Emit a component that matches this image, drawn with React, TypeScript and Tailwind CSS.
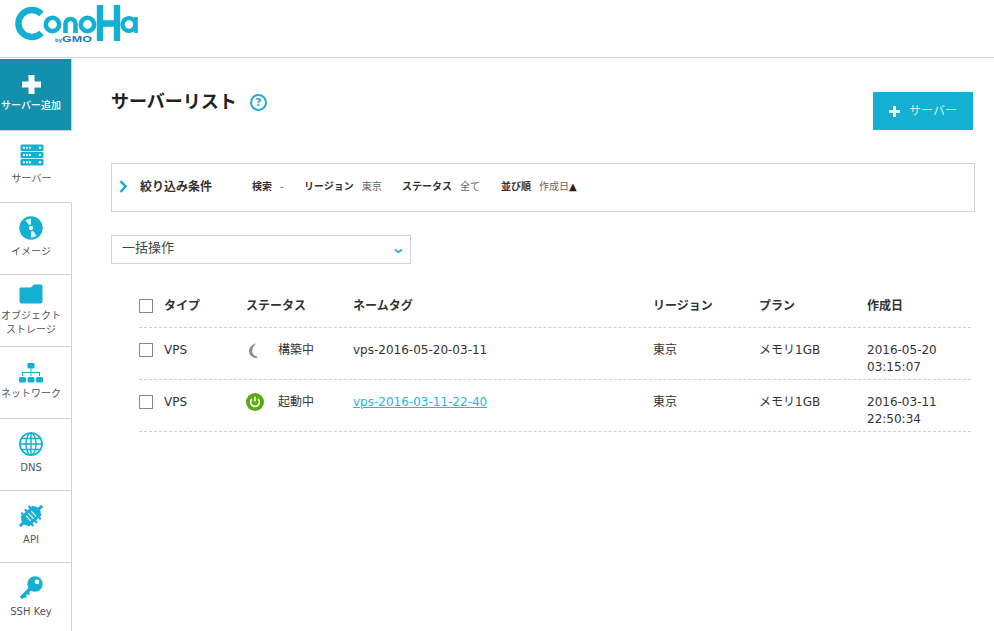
import type { ReactNode } from 'react';

const FONT = "font-['DejaVu_Sans','Noto_Sans_CJK_JP',sans-serif]";

const Logo = () => (
  <svg width="126" height="40" viewBox="14 4 126 40" className="block">
    <g fill="none" stroke="#13b0d3">
      <path d="M41.5 14 A13.5 13.5 0 1 0 41.5 33" strokeWidth="6.5" />
      <circle cx="52.5" cy="24.5" r="6.7" strokeWidth="4.6" />
      <path d="M65.5 33 V24 A5 5 0 0 1 75.5 24 V33" strokeWidth="4.6" />
      <circle cx="87.5" cy="24.5" r="6.7" strokeWidth="4.6" />
      <path d="M100 5 V41 M117 5 V41 M100 23.5 H117" strokeWidth="6.4" />
      <circle cx="129" cy="24.5" r="6.4" strokeWidth="4.4" />
      <path d="M136 17 V33" strokeWidth="3.6" />
    </g>
    <text x="55" y="41.5" fontSize="6" fontWeight="700" fill="#1f78b8" fontFamily="Liberation Sans">by</text>
    <text x="62" y="42" fontSize="9.5" fontWeight="700" fill="#1f78b8" fontFamily="Liberation Sans" textLength="30" lengthAdjust="spacingAndGlyphs">GMO</text>
  </svg>
);

const ServerIcon = () => (
  <svg width="24" height="22" viewBox="0 0 24 22" fill="#13b0d3">
    <rect x="0.5" y="0.5" width="23" height="6.4" rx="1.5" />
    <rect x="0.5" y="7.8" width="23" height="6.4" rx="1.5" />
    <rect x="0.5" y="15.1" width="23" height="6.4" rx="1.5" />
    <g fill="#fff">
      <rect x="3" y="2.8" width="2" height="1.8" /><rect x="6" y="2.8" width="2" height="1.8" /><rect x="9" y="2.8" width="2" height="1.8" /><circle cx="20" cy="3.7" r="1.3" />
      <rect x="3" y="10.1" width="2" height="1.8" /><rect x="6" y="10.1" width="2" height="1.8" /><rect x="9" y="10.1" width="2" height="1.8" /><circle cx="20" cy="11" r="1.3" />
      <rect x="3" y="17.4" width="2" height="1.8" /><rect x="6" y="17.4" width="2" height="1.8" /><rect x="9" y="17.4" width="2" height="1.8" /><circle cx="20" cy="18.3" r="1.3" />
    </g>
  </svg>
);

const DiscIcon = () => (
  <svg width="24" height="24" viewBox="0 0 24 24">
    <circle cx="12" cy="12" r="11.7" fill="#13b0d3" />
    <g transform="rotate(-18 12 12)">
      <path d="M12 12 L9 3 A9.5 9.5 0 0 1 15 3 Z M12 12 L15 21 A9.5 9.5 0 0 1 9 21 Z" fill="#d9f4fa" />
    </g>
    <circle cx="12" cy="12" r="3.4" fill="#13b0d3" />
    <circle cx="12" cy="12" r="2.2" fill="#fff" />
  </svg>
);

const FolderIcon = () => (
  <svg width="24" height="20" viewBox="0 0 24 20" fill="#13b0d3">
    <path d="M1.5 3.5 H12 L15 0.5 H22 A1.6 1.6 0 0 1 23.5 2 V17.5 A2 2 0 0 1 21.5 19.5 H2.5 A2 2 0 0 1 0.5 17.5 V4.5 A1 1 0 0 1 1.5 3.5 Z" />
  </svg>
);

const NetworkIcon = () => (
  <svg width="24" height="20" viewBox="0 0 24 20" fill="#13b0d3">
    <rect x="8.5" y="0" width="7" height="5.5" rx="1" />
    <path d="M11.5 5.5 H12.5 V9 H21 V13 H20 V10 H12.5 V13 H11.5 V10 H4 V13 H3 V9 H11.5 Z" />
    <rect x="0" y="14" width="7" height="5.5" rx="1.5" />
    <rect x="8.5" y="14" width="7" height="5.5" rx="1.5" />
    <rect x="17" y="14" width="7" height="5.5" rx="1.5" />
  </svg>
);

const GlobeIcon = () => (
  <svg width="24" height="24" viewBox="0 0 24 24" fill="none" stroke="#13b0d3" strokeWidth="1.4">
    <circle cx="12" cy="12" r="11" strokeWidth="1.7" />
    <ellipse cx="12" cy="12" rx="5" ry="11" />
    <path d="M12 1 V23 M1 12 H23 M2.6 6.5 H21.4 M2.6 17.5 H21.4" />
  </svg>
);

const PlugIcon = () => (
  <svg width="24" height="24" viewBox="0 0 24 24">
    <g transform="rotate(-42 12 12)">
      <path d="M-3 10.5 H1 L4 5.5 H20 L23 10.5 H27 V13.5 H23 L20 18.5 H4 L1 13.5 H-3 Z" fill="#13b0d3" />
      <path d="M7 3 V6 M12 3 V6 M17 3 V6 M7 18 V21 M12 18 V21 M17 18 V21" stroke="#13b0d3" strokeWidth="2.2" />
      <path d="M8.5 8.5 V15.5 M12 8 V16 M15.5 8.5 V15.5" stroke="#eafafd" strokeWidth="1.2" />
    </g>
  </svg>
);

const KeyIcon = () => (
  <svg width="24" height="24" viewBox="0 0 24 24" fill="none">
    <circle cx="16" cy="8" r="7.7" fill="#13b0d3" />
    <path d="M12 12 L2 22" stroke="#13b0d3" strokeWidth="3.8" />
    <path d="M4.5 19 L7 21.5 M7.8 15.8 L10.3 18.3" stroke="#13b0d3" strokeWidth="2.4" />
    <circle cx="18" cy="5.8" r="2.4" fill="#fff" />
  </svg>
);

const PowerIcon = () => (
  <svg width="18" height="18" viewBox="0 0 18 18">
    <circle cx="9" cy="9" r="9" fill="#5aab0e" />
    <path d="M6 5.8 A4.4 4.4 0 1 0 12 5.8" fill="none" stroke="#fff" strokeWidth="1.6" />
    <path d="M9 3.8 V8.6" stroke="#fff" strokeWidth="1.6" />
  </svg>
);

const SpinnerIcon = () => (
  <svg width="18" height="18" viewBox="0 0 18 18">
    <path d="M10 2.5 C5.5 3.5 2.8 7 3 10.5 C3.3 14.5 7 17.6 11.5 17 L11 15.5 C8.3 15 6.2 13 6.2 10.3 C6.2 7.6 7.8 4.8 10 2.5 Z" fill="#8f8f8f" />
  </svg>
);

const PlusIcon = ({ size, bar }: { size: number; bar: number }) => (
  <svg width={size} height={size} viewBox={`0 0 ${size} ${size}`} fill="#fff">
    <rect x={(size - bar) / 2} y="0" width={bar} height={size} />
    <rect x="0" y={(size - bar) / 2} width={size} height={bar} />
  </svg>
);

const NavItem = ({ icon, label, pad = 'pt-[13px]', gap = 'mt-[5px]' }: { icon: ReactNode; label: ReactNode; pad?: string; gap?: string }) => (
  <div className={`flex h-[72px] w-full flex-col items-center border-b border-[#d2d2d2] pr-[9px] last:border-b-0 ${pad}`}>
    <div className="flex items-center justify-center">{icon}</div>
    <div className={`whitespace-nowrap text-center text-[10px] leading-[14px] text-[#555] ${gap}`}>{label}</div>
  </div>
);

const Filter = ({ label, value, gap }: { label: string; value: ReactNode; gap: string }) => (
  <div className={`flex items-center gap-[8px] ${gap}`}>
    <span className="font-bold text-[#333]">{label}</span>
    <span className="text-[#666]">{value}</span>
  </div>
);

const COLS = 'grid grid-cols-[25px_82px_107px_300px_106px_108px_1fr]';

const Checkbox = () => <span className="block h-[14px] w-[14px] border border-[#888] bg-white" />;

const Row = ({ icon, status, tag, link, date, time }: { icon: ReactNode; status: string; tag: string; link?: boolean; date: string; time: string }) => (
  <div className={`${COLS} h-[52px] items-start border-b border-dashed border-[#cfcfcf] pt-[13px] text-[12px] leading-[18px] text-[#333]`}>
    <div className="pt-[2px]"><Checkbox /></div>
    <div>VPS</div>
    <div className="flex items-center">
      <span className="flex h-[18px] w-[32px] items-center">{icon}</span>
      <span>{status}</span>
    </div>
    <div>{link ? <a className="text-[#29b6e0] underline">{tag}</a> : tag}</div>
    <div>東京</div>
    <div>メモリ1GB</div>
    <div className="pt-[1px] leading-[17px]">{date}<br />{time}</div>
  </div>
);

export default function App() {
  return (
    <div className={`${FONT} h-[631px] w-[994px] overflow-hidden bg-white`}>
      <header className="h-[58px] border-b border-[#d2d2d2] pl-[14px] pt-[4px]">
        <Logo />
      </header>
      <div className="flex">
        <aside className="w-[72px] shrink-0 pt-[1px]">
          <div className="flex h-[72px] w-[72px] flex-col items-center border-r border-b border-[#d2d2d2] bg-[#1390ab] pr-[9px] pt-[16px]">
            <PlusIcon size={19} bar={6} />
            <div className="mt-[5px] whitespace-nowrap text-[10px] font-medium leading-[14px] text-white">サーバー追加</div>
          </div>
          <div className="flex h-[71px] flex-col items-center pr-[9px] pt-[13px]">
            <ServerIcon />
            <div className="mt-[6px] text-[10px] leading-[14px] text-[#555]">サーバー</div>
          </div>
          <div className="h-[430px] rounded-tr-[2px] border-t border-r border-[#d2d2d2]">
            <NavItem icon={<DiscIcon />} label="イメージ" />
            <NavItem icon={<FolderIcon />} pad="pt-[9px]" gap="mt-[5px]" label={<>オブジェクト<br />ストレージ</>} />
            <NavItem icon={<NetworkIcon />} pad="pt-[16px]" gap="mt-[4px]" label="ネットワーク" />
            <NavItem icon={<GlobeIcon />} label="DNS" />
            <NavItem icon={<PlugIcon />} label="API" />
            <NavItem icon={<KeyIcon />} label="SSH Key" />
          </div>
        </aside>
        <main className="w-[903px] pl-[39px]">
          <div className="flex h-[105px] items-start justify-between pr-[2px]">
            <div className="flex items-center pt-[31px]">
              <h1 className="text-[18px] font-bold leading-[26px] text-[#222]">サーバーリスト</h1>
              <span className="ml-[13px] flex h-[17px] w-[17px] items-center justify-center rounded-full border-2 border-[#29a9cf] text-[11px] font-bold leading-none text-[#29a9cf]">?</span>
            </div>
            <button className="mt-[34px] flex h-[38px] w-[100px] items-center justify-center gap-[9px] bg-[#13b0d3] text-[12px] text-[#d6f1f7]">
              <PlusIcon size={11} bar={3} />
              サーバー
            </button>
          </div>

          <div className="flex h-[49px] w-[864px] items-center border border-[#d2d2d2] pb-[2px] text-[10px]">
            <svg width="9" height="13" viewBox="0 0 9 13" className="ml-[7px]">
              <path d="M1.5 1 L6.5 6.5 L1.5 12" fill="none" stroke="#13b0d3" strokeWidth="2.6" />
            </svg>
            <span className="ml-[12px] w-[112px] text-[12px] font-bold text-[#333]">絞り込み条件</span>
            <Filter label="検索" value="-" gap="w-[52px]" />
            <Filter label="リージョン" value="東京" gap="w-[98px]" />
            <Filter label="ステータス" value="全て" gap="w-[99px]" />
            <Filter label="並び順" value={<>作成日<span className="text-[#222]">▲</span></>} gap="" />
          </div>

          <div className="mt-[23px] flex h-[29px] w-[300px] items-center justify-between border border-[#d2d2d2] pl-[10px] pr-[7px] text-[13px] text-[#444]">
            <span className="-mt-[3px]">一括操作</span>
            <svg width="9" height="6" viewBox="0 0 9 6" className="mt-[2px]">
              <path d="M1 1.5 L4.5 4.2 L8 1.5" fill="none" stroke="#13b0d3" strokeWidth="1.7" />
            </svg>
          </div>

          <div className="ml-[28px] mt-[23px] w-[832px]">
            <div className={`${COLS} h-[41px] items-center border-b border-dashed border-[#cfcfcf] pb-[2px] text-[12px] font-bold text-[#333]`}>
              <Checkbox />
              <div>タイプ</div>
              <div>ステータス</div>
              <div>ネームタグ</div>
              <div>リージョン</div>
              <div>プラン</div>
              <div>作成日</div>
            </div>
            <Row icon={<SpinnerIcon />} status="構築中" tag="vps-2016-05-20-03-11" date="2016-05-20" time="03:15:07" />
            <Row icon={<PowerIcon />} status="起動中" tag="vps-2016-03-11-22-40" link date="2016-03-11" time="22:50:34" />
          </div>
        </main>
      </div>
    </div>
  );
}
